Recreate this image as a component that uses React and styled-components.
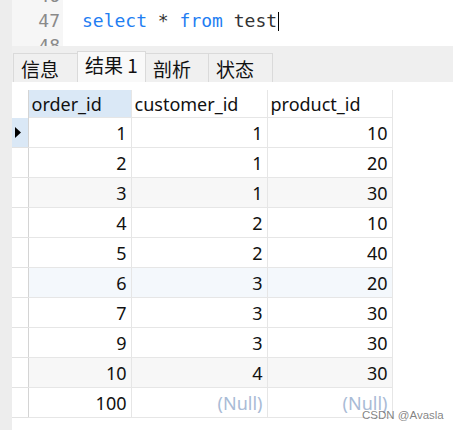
import React from 'react';
import styled, { createGlobalStyle } from 'styled-components';

const GlobalStyle = createGlobalStyle`
	html, body {
		margin: 0;
		padding: 0;
		background: #ffffff;
		overflow: hidden;
	}
`;

const rows = [
	{ id: 1, customer: 1, product: 10, current: true },
	{ id: 2, customer: 1, product: 20 },
	{ id: 3, customer: 1, product: 30, tint: '#f7f7f7' },
	{ id: 4, customer: 2, product: 10 },
	{ id: 5, customer: 2, product: 40 },
	{ id: 6, customer: 3, product: 20, tint: '#f4f8fc' },
	{ id: 7, customer: 3, product: 30 },
	{ id: 9, customer: 3, product: 30 },
	{ id: 10, customer: 4, product: 30, tint: '#f7f7f7' },
	{ id: 100, customer: null, product: null },
];

const tabs = [
	{ label: '信息', width: 65 },
	{ label: '结果 1', width: 69, active: true },
	{ label: '剖析', width: 64 },
	{ label: '状态', width: 65 },
];

const App = () => {
	return (
		<>
			<GlobalStyle />
			<Page>
				<Strip />
				<Main>
					<Editor>
						<Gutter>
							<Lines>
								<div>46</div>
								<div>47</div>
								<div>48</div>
							</Lines>
						</Gutter>
						<Code>
							<Lines>
								<div>&nbsp;</div>
								<div>
									<Keyword>select</Keyword> * <Keyword>from</Keyword> test
									<Caret />
								</div>
								<div>&nbsp;</div>
							</Lines>
						</Code>
					</Editor>
					<TabBar>
						{tabs.map((t) => (
							<Tab key={t.label} $width={t.width} $active={t.active}>
								{t.label}
							</Tab>
						))}
					</TabBar>
					<Grid>
						<colgroup>
							<col style={{ width: 16 }} />
							<col style={{ width: 103 }} />
							<col style={{ width: 136 }} />
							<col style={{ width: 125 }} />
						</colgroup>
						<thead>
							<tr>
								<Corner />
								<HeadCell $selected>order_id</HeadCell>
								<HeadCell>customer_id</HeadCell>
								<HeadCell>product_id</HeadCell>
							</tr>
						</thead>
						<tbody>
							{rows.map((r) => (
								<Row key={r.id} $tint={r.tint}>
									<RowMark $current={r.current}>
										{r.current && (
											<svg width='6' height='11' viewBox='0 0 6 11'>
												<path d='M0 0 L6 5.5 L0 11 Z' fill='#000' />
											</svg>
										)}
									</RowMark>
									<Cell>{r.id}</Cell>
									<Cell $null={r.customer === null}>
										{r.customer === null ? '(Null)' : r.customer}
									</Cell>
									<Cell $null={r.product === null}>
										{r.product === null ? '(Null)' : r.product}
									</Cell>
								</Row>
							))}
						</tbody>
					</Grid>
				</Main>
				<Watermark>CSDN @Avasla</Watermark>
			</Page>
		</>
	);
};

export default App;

const Page = styled.div`
	position: relative;
	display: flex;
	width: 453px;
	height: 430px;
	overflow: hidden;
	background: #ffffff;
`;

const Strip = styled.div`
	flex: 0 0 12px;
	background: #ededed;
`;

const Main = styled.div`
	flex: 1;
	display: flex;
	flex-direction: column;
`;

const Editor = styled.div`
	display: flex;
	height: 46px;
	overflow: hidden;
	font-family: 'DejaVu Sans Mono', 'Liberation Mono', monospace;
	font-size: 18px;
`;

const Lines = styled.div`
	margin-top: -17px;
	line-height: 25px;
	white-space: pre;
`;

const Gutter = styled.div`
	flex: 0 0 48px;
	padding-right: 3px;
	text-align: right;
	background: #f6f6f6;
	color: #8a8a8a;
`;

const Code = styled.div`
	flex: 1;
	padding-left: 19px;
	color: #333333;
	background: #ffffff;
`;

const Keyword = styled.span`
	color: #1f7ef2;
`;

const Caret = styled.span`
	display: inline-block;
	width: 1px;
	height: 19px;
	margin-left: 1px;
	vertical-align: -4px;
	background: #000000;
`;

const TabBar = styled.div`
	display: flex;
	align-items: flex-end;
	height: 36px;
	padding-left: 1px;
	background: #efefef;
	box-sizing: border-box;
`;

const Tab = styled.div`
	box-sizing: border-box;
	width: ${(p) => p.$width}px;
	height: ${(p) => (p.$active ? 31 : 29)}px;
	margin-left: -1px;
	padding: ${(p) => (p.$active ? '2px' : '4px')} 0 0 7px;
	border: 1px solid #dadada;
	border-bottom: none;
	background: ${(p) => (p.$active ? '#f9f9f9' : '#f0f0f0')};
	font-family: 'Noto Sans CJK SC', 'Noto Sans', sans-serif;
	font-size: 19px;
	line-height: 22px;
	color: #111111;
	position: relative;
	z-index: ${(p) => (p.$active ? 1 : 0)};
	&:first-child {
		margin-left: 0;
	}
`;

const Grid = styled.table`
	margin-top: 8px;
	width: 380px;
	table-layout: fixed;
	border-collapse: collapse;
	font-family: 'Noto Sans', 'Noto Sans CJK SC', sans-serif;
	font-size: 18px;
	color: #111111;
`;

const Corner = styled.th`
	height: 27px;
	padding: 0;
	border-right: 1px solid #d4d4d4;
`;

const HeadCell = styled.th`
	height: 27px;
	padding: 0 0 0 3px;
	text-align: left;
	font-weight: normal;
	white-space: nowrap;
	overflow: hidden;
	background: ${(p) => (p.$selected ? '#dae8f6' : '#ffffff')};
	border-right: 1px solid #e6e6e6;
	border-bottom: 1px solid #e6e6e6;
`;

const Row = styled.tr`
	background: ${(p) => p.$tint || '#ffffff'};
`;

const RowMark = styled.td`
	height: 29px;
	padding: 0 0 0 3px;
	background: ${(p) => (p.$current ? '#dae8f6' : '#ffffff')};
	border-right: 1px solid #d4d4d4;
	border-bottom: 1px solid #e2e2e2;
	svg {
		display: block;
	}
`;

const Cell = styled.td`
	height: 29px;
	padding: 0 4px 0 0;
	text-align: right;
	white-space: nowrap;
	color: ${(p) => (p.$null ? '#a9bbd6' : '#111111')};
	border-right: 1px solid #e6e6e6;
	border-bottom: 1px solid #e6e6e6;
`;

const Watermark = styled.div`
	position: absolute;
	left: 362px;
	top: 409px;
	white-space: nowrap;
	font-family: 'Liberation Sans', Arial, sans-serif;
	font-size: 11.5px;
	color: rgba(90, 90, 90, 0.75);
	pointer-events: none;
`;
